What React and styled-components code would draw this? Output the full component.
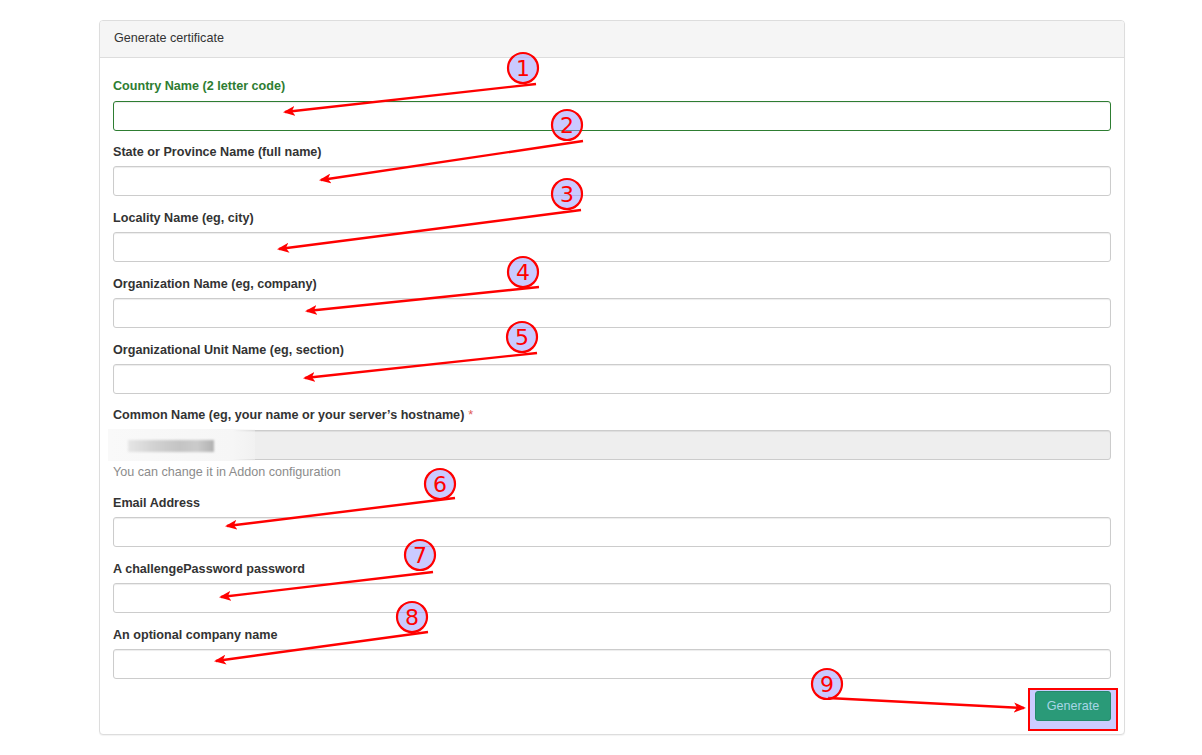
import styled, { createGlobalStyle } from "styled-components";

const GlobalStyle = createGlobalStyle`
  body {
    margin: 0;
    background: #fff;
    font-family: "Liberation Sans", Arial, sans-serif;
    color: #333;
  }
`;

const Page = styled.div`
  position: relative;
  width: 1202px;
  height: 755px;
  padding: 20px 0 0 99px;
  box-sizing: border-box;
`;

const Panel = styled.div`
  width: 1026px;
  box-sizing: border-box;
  border: 1px solid #ddd;
  border-radius: 4px;
  background: #fff;
  box-shadow: 0 1px 1px rgba(0, 0, 0, 0.05);
`;

const PanelHeading = styled.div`
  height: 37px;
  padding: 0 14px 3px;
  box-sizing: border-box;
  display: flex;
  align-items: center;
  background: #f5f5f5;
  border-bottom: 1px solid #ddd;
  border-radius: 3px 3px 0 0;
  font-size: 12.6px;
  color: #333;
`;

const PanelBody = styled.div`
  padding: 19px 13px 13px 13px;
  display: flex;
  flex-direction: column;
`;

const Group = styled.div`
  margin-bottom: 12.4px;
  display: flex;
  flex-direction: column;
`;

const Label = styled.label`
  font-size: 12.6px;
  line-height: 18.5px;
  font-weight: bold;
  margin-bottom: 5px;
  color: ${(p) => (p.$success ? "#2e7d32" : "#333")};
`;

const Star = styled.span`
  color: #e05a55;
  font-weight: normal;
  margin-left: 4px;
`;

const InputWrap = styled.div`
  position: relative;
`;

const Input = styled.input`
  display: block;
  width: 100%;
  height: 30px;
  box-sizing: border-box;
  padding: 5px 10px;
  font-size: 13px;
  font-family: inherit;
  border: 1px solid ${(p) => (p.$success ? "#2e7d32" : "#ccc")};
  border-radius: 3px;
  background: ${(p) => (p.disabled ? "#eee" : "#fff")};
  box-shadow: inset 0 1px 1px rgba(0, 0, 0, 0.075);
  outline: none;
`;

const Redaction = styled.div`
  position: absolute;
  left: -5px;
  top: -1px;
  width: 147px;
  height: 32px;
  background: linear-gradient(90deg, #f9f9f9 0%, #f6f6f6 85%, rgba(246, 246, 246, 0.4) 100%);
  display: flex;
  align-items: center;
  padding: 3px 0 0 20px;
  box-sizing: border-box;
`;

const RedactionBar = styled.div`
  width: 86px;
  height: 12px;
  background: linear-gradient(90deg, #e6e6e6 0%, #d2d2d2 30%, #c4c4c4 60%, #cbcbcb 80%, #b2b2b2 100%);
  filter: blur(1px);
`;

const Help = styled.div`
  font-size: 12.6px;
  line-height: 18.5px;
  color: #8c8c8c;
  margin-top: 3px;
`;

const Actions = styled.div`
  display: flex;
  justify-content: flex-end;
`;

const Highlight = styled.div`
  padding: 1px 5px 8px 5px;
  margin: -4px -7px -10px 0;
  border: 2px solid #ff0000;
  background: #ccccff;
`;

const Button = styled.button`
  height: 30px;
  width: 76px;
  padding: 0;
  font-size: 12.6px;
  font-family: inherit;
  color: #a8d6e6;
  background: #2a9a78;
  border: 1px solid #24896a;
  border-radius: 3px;
`;

const Overlay = styled.svg`
  position: absolute;
  left: 0;
  top: 0;
  pointer-events: none;
`;

const fields = [
  { label: "Country Name (2 letter code)", success: true },
  { label: "State or Province Name (full name)" },
  { label: "Locality Name (eg, city)" },
  { label: "Organization Name (eg, company)" },
  { label: "Organizational Unit Name (eg, section)" },
  { label: "Common Name (eg, your name or your server\u2019s hostname)", common: true },
  { label: "Email Address" },
  { label: "A challengePassword password" },
  { label: "An optional company name" },
];

const notes = [
  { n: 1, cx: 523, cy: 68, from: [536, 84], to: [285, 112] },
  { n: 2, cx: 567, cy: 125, from: [583, 141], to: [321, 180] },
  { n: 3, cx: 567, cy: 194, from: [581, 210], to: [279, 249] },
  { n: 4, cx: 523, cy: 272, from: [539, 287], to: [307, 311] },
  { n: 5, cx: 522, cy: 337, from: [537, 353], to: [305, 378] },
  { n: 6, cx: 440, cy: 484, from: [455, 498], to: [227, 526] },
  { n: 7, cx: 420, cy: 555, from: [433, 572], to: [221, 597] },
  { n: 8, cx: 412, cy: 617, from: [428, 632], to: [216, 661] },
  { n: 9, cx: 827, cy: 684, from: [828, 698], to: [1024, 708] },
];

const Annotations = () => (
  <Overlay width="1202" height="755" viewBox="0 0 1202 755">
    <defs>
      <marker id="head" viewBox="0 0 12 10" refX="10" refY="5" markerWidth="12" markerHeight="10" markerUnits="userSpaceOnUse" orient="auto">
        <path d="M0 0 L12 5 L0 10 L3 5 Z" fill="#ff0000" />
      </marker>
    </defs>
    {notes.map((a) => (
      <g key={a.n}>
        <line x1={a.from[0]} y1={a.from[1]} x2={a.to[0]} y2={a.to[1]} stroke="#ff0000" strokeWidth="2.4" markerEnd="url(#head)" />
        <circle cx={a.cx} cy={a.cy} r="15" fill="rgb(150,150,255)" fillOpacity="0.5" stroke="#ff0000" strokeWidth="2.2" />
        <text x={a.cx} y={a.cy + 8} textAnchor="middle" fontSize="22" fontFamily="'DejaVu Sans', sans-serif" fill="#ff0000">
          {a.n}
        </text>
      </g>
    ))}
  </Overlay>
);

export default function App() {
  return (
    <>
      <GlobalStyle />
      <Page>
        <Panel>
          <PanelHeading>Generate certificate</PanelHeading>
          <PanelBody>
            {fields.map((f) => (
              <Group key={f.label}>
                <Label $success={f.success}>
                  {f.label}
                  {f.common && <Star>*</Star>}
                </Label>
                <InputWrap>
                  <Input type="text" $success={f.success} disabled={f.common} />
                  {f.common && (
                    <Redaction>
                      <RedactionBar />
                    </Redaction>
                  )}
                </InputWrap>
                {f.common && <Help>You can change it in Addon configuration</Help>}
              </Group>
            ))}
            <Actions>
              <Highlight>
                <Button>Generate</Button>
              </Highlight>
            </Actions>
          </PanelBody>
        </Panel>
        <Annotations />
      </Page>
    </>
  );
}
